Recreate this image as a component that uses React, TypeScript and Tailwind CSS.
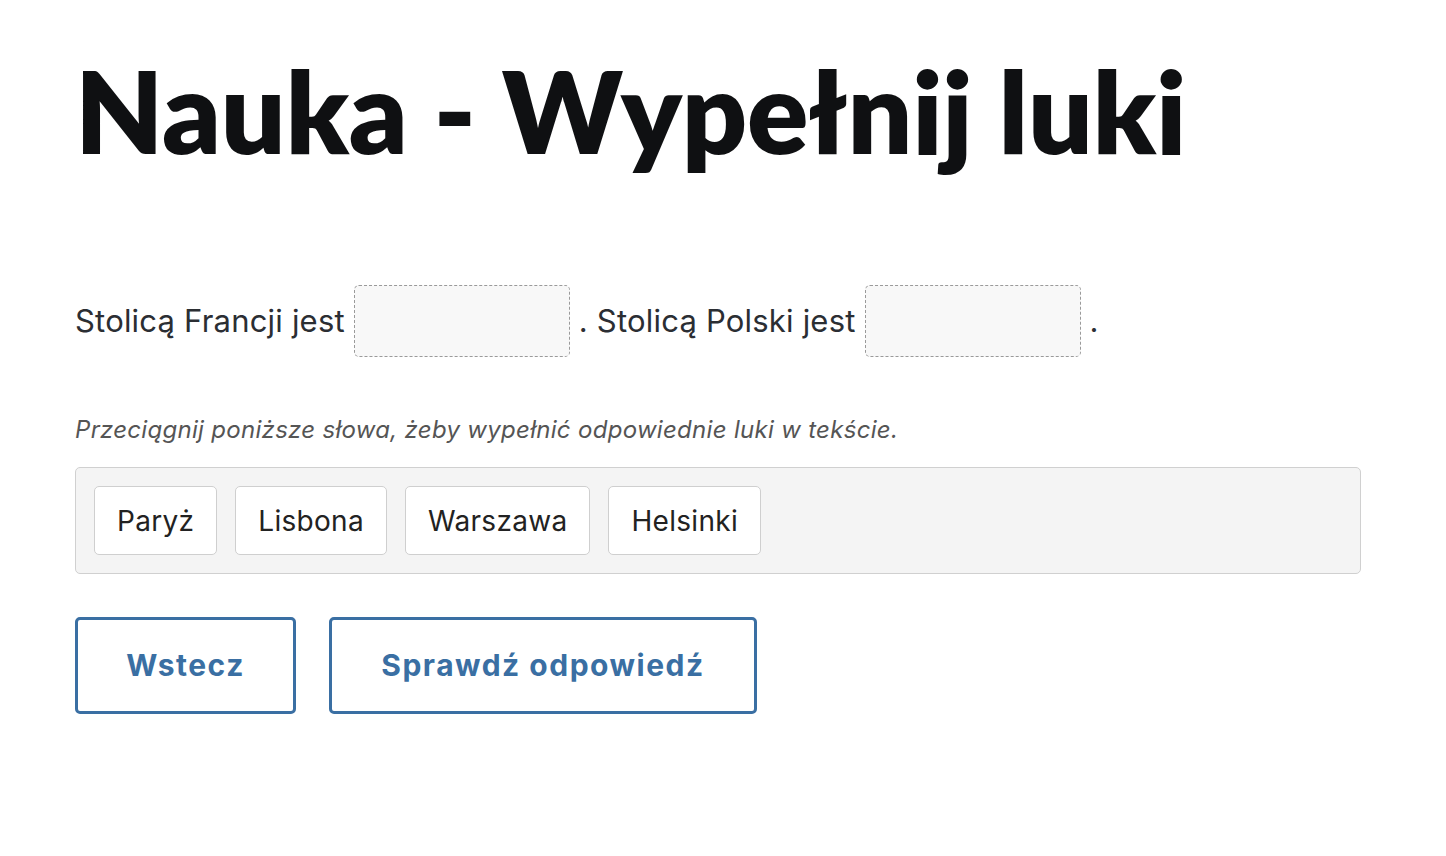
import React from 'react';

const body = { fontFamily: 'Inter, Lato, sans-serif' };
const heading = { fontFamily: 'Lato, sans-serif' };

function Blank() {
  return (
    <span className="mx-[9px] inline-block h-[72px] w-[216px] rounded-[5px] border border-dashed border-[#9a9a9a] bg-[#f8f8f8] align-middle" />
  );
}

function Chip({ label }: { label: string }) {
  return (
    <div className="flex h-[69px] items-center rounded-[5px] border border-[#cfcfcf] bg-white px-[22px] text-[28px] tracking-[0.3px] text-[#222]">
      {label}
    </div>
  );
}

export default function App() {
  const words = ['Paryż', 'Lisbona', 'Warszawa', 'Helsinki'];
  return (
    <div className="min-h-screen bg-white px-[75px] pt-[47px]" style={body}>
      <h1
        className="text-[114px] leading-[1.1] font-extrabold tracking-[-0.3px] text-[#0f1012]"
        style={heading}
      >
        Nauka - Wypełnij luki
      </h1>

      <p className="mt-[113px] flex items-center text-[31px] tracking-[0.2px] text-[#2b2e33]">
        <span>Stolicą Francji jest</span>
        <Blank />
        <span>. Stolicą Polski jest</span>
        <Blank />
        <span>.</span>
      </p>

      <p className="mt-[55px] text-[24px] italic tracking-[0.3px] text-[#555]">
        Przeciągnij poniższe słowa, żeby wypełnić odpowiednie luki w tekście.
      </p>

      <div className="mt-[19px] flex w-[1286px] gap-[18px] rounded-[5px] border border-[#d0d0d0] bg-[#f4f4f4] p-[18px]">
        {words.map((w) => (
          <Chip key={w} label={w} />
        ))}
      </div>

      <div className="mt-[43px] flex gap-[33px]">
        <button className="h-[97px] w-[221px] rounded-[5px] border-[3px] border-[#3a6fa3] bg-white text-[30px] font-bold tracking-[1.5px] text-[#3a6fa3]">
          Wstecz
        </button>
        <button className="h-[97px] w-[428px] rounded-[5px] border-[3px] border-[#3a6fa3] bg-white text-[30px] font-bold tracking-[1.5px] text-[#3a6fa3]">
          Sprawdź odpowiedź
        </button>
      </div>
    </div>
  );
}
